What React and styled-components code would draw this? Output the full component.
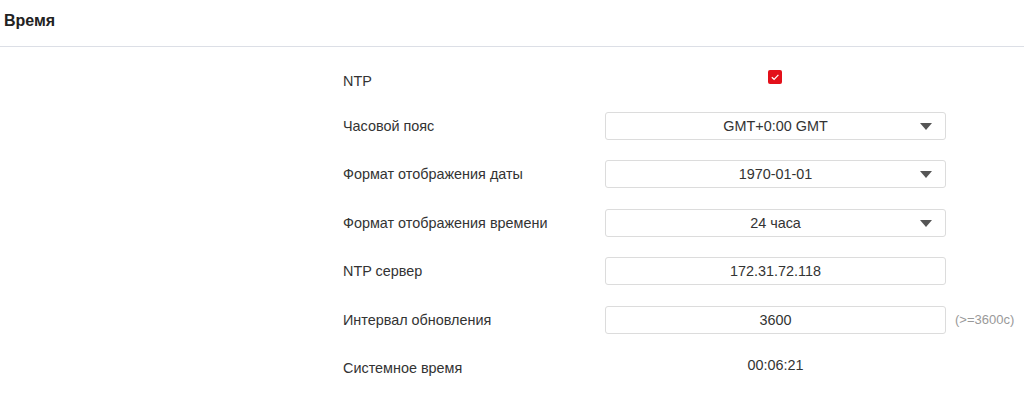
import React from "react";
import styled, { createGlobalStyle } from "styled-components";

const Global = createGlobalStyle`
  html, body { margin: 0; padding: 0; background: #fff; }
  body { font-family: "Liberation Sans", Arial, sans-serif; color: #333; }
`;

const Page = styled.div`
  width: 1024px;
  height: 399px;
  overflow: hidden;
  background: #fff;
`;

const Header = styled.div`
  height: 47px;
  border-bottom: 1px solid #dcdfe6;
  display: flex;
  align-items: center;
  padding-left: 4px;
  box-sizing: border-box;
  font-size: 16px;
  font-weight: bold;
  color: #222;
  padding-bottom: 4px;
`;

const Form = styled.div`
  display: flex;
  flex-direction: column;
  gap: 20.5px;
  padding: 16px 0 0 343px;
`;

const Row = styled.div`
  display: grid;
  grid-template-columns: 262px 341px auto;
  align-items: center;
  height: 28px;
`;

const Label = styled.div`
  font-size: 14.4px;
  color: #333;
  margin-top: ${(p) => p.$shift || 0}px;
`;

const Value = styled.div`
  display: flex;
  justify-content: center;
  align-items: center;
  font-size: 14.4px;
  color: #333;
  margin-top: ${(p) => p.$shift || 0}px;
`;

const Box = styled.div`
  position: relative;
  height: 28px;
  box-sizing: border-box;
  border: 1px solid #dcdcdc;
  border-radius: 3px;
  display: flex;
  align-items: center;
  justify-content: center;
  font-size: 14.4px;
  color: #333;
`;

const Arrow = styled.span`
  position: absolute;
  right: 13px;
  top: 50%;
  margin-top: -3px;
  width: 0;
  height: 0;
  border-left: 6.5px solid transparent;
  border-right: 6.5px solid transparent;
  border-top: 7px solid #555;
`;

const Check = styled.span`
  width: 14px;
  height: 14px;
  border-radius: 2px;
  background: #e3101a;
  display: flex;
  align-items: center;
  justify-content: center;
  margin-left: -2px;
`;

const Hint = styled.span`
  font-size: 13px;
  color: #999;
  padding-left: 9px;
`;

const Select = ({ children }) => (
  <Box>
    {children}
    <Arrow />
  </Box>
);

export default function App() {
  return (
    <Page>
      <Global />
      <Header>Время</Header>
      <Form>
        <Row>
          <Label $shift={7}>NTP</Label>
          <Value>
            <Check>
              <svg width="10" height="10" viewBox="0 0 10 10">
                <path d="M1.8 5.2 L4.1 7.3 L8.4 2.8" fill="none" stroke="#fff" strokeWidth="1.2" />
              </svg>
            </Check>
          </Value>
        </Row>
        <Row>
          <Label>Часовой пояс</Label>
          <Select>GMT+0:00 GMT</Select>
        </Row>
        <Row>
          <Label>Формат отображения даты</Label>
          <Select>1970-01-01</Select>
        </Row>
        <Row>
          <Label>Формат отображения времени</Label>
          <Select>24 часа</Select>
        </Row>
        <Row>
          <Label>NTP сервер</Label>
          <Box>172.31.72.118</Box>
        </Row>
        <Row>
          <Label>Интервал обновления</Label>
          <Box>3600</Box>
          <Hint>(&gt;=3600c)</Hint>
        </Row>
        <Row>
          <Label>Системное время</Label>
          <Value $shift={-6}>00:06:21</Value>
        </Row>
      </Form>
    </Page>
  );
}
